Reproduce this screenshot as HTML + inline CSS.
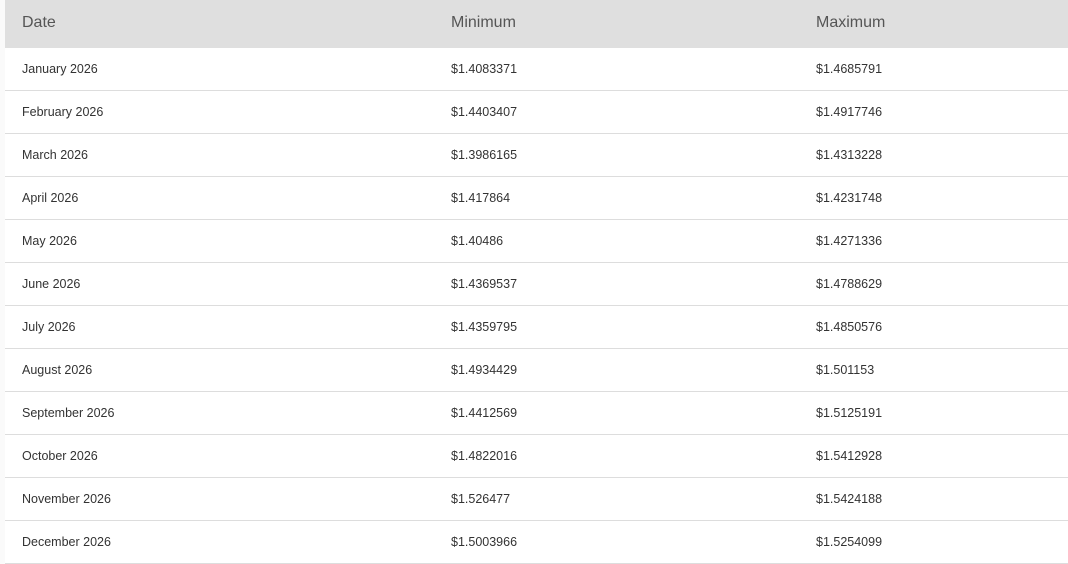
<!DOCTYPE html>
<html><head><style>
html,body{margin:0;padding:0;background:#fafafa;width:1068px;height:562px;overflow:hidden;font-family:"Liberation Sans",sans-serif}
.t{position:absolute;left:5px;top:0;width:1063px;background:#fff}
.h{height:48px;background:#dfdfdf;position:relative;color:#555;font-size:16px}
.r{height:42px;border-bottom:1px solid #ddd;position:relative;color:#333;font-size:12.5px}
.c{position:absolute;top:0;line-height:43px;white-space:nowrap}
.h .c{line-height:46px}
.a{left:17px}.b{left:446px}.d{left:811px}
</style></head><body><div class="t">
<div class="h"><span class="c a">Date</span><span class="c b">Minimum</span><span class="c d">Maximum</span></div>
<div class="r"><span class="c a">January 2026</span><span class="c b">$1.4083371</span><span class="c d">$1.4685791</span></div>
<div class="r"><span class="c a">February 2026</span><span class="c b">$1.4403407</span><span class="c d">$1.4917746</span></div>
<div class="r"><span class="c a">March 2026</span><span class="c b">$1.3986165</span><span class="c d">$1.4313228</span></div>
<div class="r"><span class="c a">April 2026</span><span class="c b">$1.417864</span><span class="c d">$1.4231748</span></div>
<div class="r"><span class="c a">May 2026</span><span class="c b">$1.40486</span><span class="c d">$1.4271336</span></div>
<div class="r"><span class="c a">June 2026</span><span class="c b">$1.4369537</span><span class="c d">$1.4788629</span></div>
<div class="r"><span class="c a">July 2026</span><span class="c b">$1.4359795</span><span class="c d">$1.4850576</span></div>
<div class="r"><span class="c a">August 2026</span><span class="c b">$1.4934429</span><span class="c d">$1.501153</span></div>
<div class="r"><span class="c a">September 2026</span><span class="c b">$1.4412569</span><span class="c d">$1.5125191</span></div>
<div class="r"><span class="c a">October 2026</span><span class="c b">$1.4822016</span><span class="c d">$1.5412928</span></div>
<div class="r"><span class="c a">November 2026</span><span class="c b">$1.526477</span><span class="c d">$1.5424188</span></div>
<div class="r"><span class="c a">December 2026</span><span class="c b">$1.5003966</span><span class="c d">$1.5254099</span></div>
</div></body></html>
